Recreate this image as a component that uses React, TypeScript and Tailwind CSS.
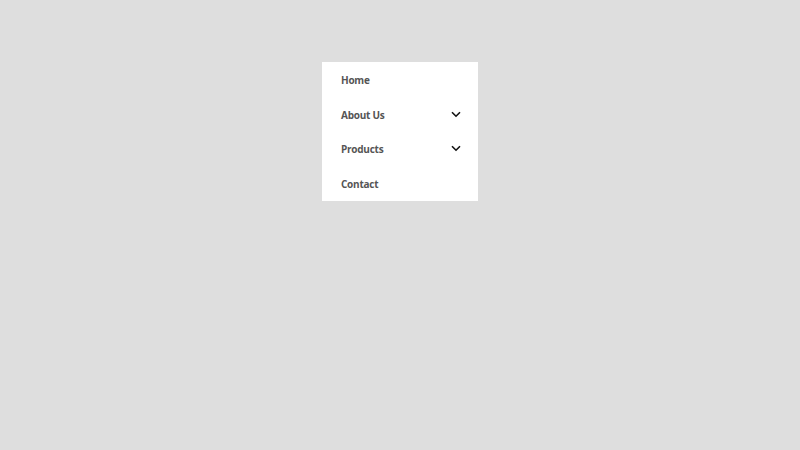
import React from 'react';

const items = [
  { label: 'Home', sub: false },
  { label: 'About Us', sub: true },
  { label: 'Products', sub: true },
  { label: 'Contact', sub: false },
];

const Chevron = () => (
  <svg width="10" height="7" viewBox="0 0 10 7" fill="none">
    <polyline points="1,1.2 5,5.2 9,1.2" stroke="#111" strokeWidth="1.6" />
  </svg>
);

const App = () => {
  return (
    <div className="min-h-[450px] w-full bg-[#dedede] pt-[62px] flex justify-center items-start" style={{ fontFamily: '"Open Sans", sans-serif' }}>
      <ul className="w-[156px] bg-white">
        {items.map((it) => (
          <li key={it.label} className="h-[34.75px] flex items-center justify-between pl-[19px] pr-[17px]">
            <span className="mt-[2px] text-[10px] font-bold tracking-[-0.25px] text-[#555555]">{it.label}</span>
            {it.sub && <Chevron />}
          </li>
        ))}
      </ul>
    </div>
  );
};

export default App;
